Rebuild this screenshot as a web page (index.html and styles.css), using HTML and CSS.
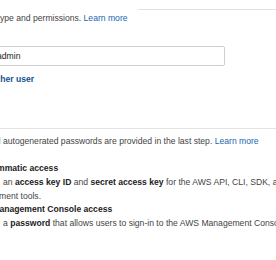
FILE: index.html
```html
<!DOCTYPE html>
<html>
<head>
<meta charset="utf-8">
<link rel="stylesheet" href="styles.css">
</head>
<body>
<div class="panel details">
  <p class="desc shift-type">type and permissions. <a class="link">Learn more</a></p>
  <div class="field">
    <div class="input">admin</div>
  </div>
  <a class="add-user">another user</a>
</div>
<div class="panel access">
  <p class="desc shift-and">and autogenerated passwords are provided in the last step. <a class="link">Learn more</a></p>
  <div class="options">
    <div class="opt-title shift-mm">mmatic access</div>
    <div class="opt-text pad">an <b>access key ID</b> and <b>secret access key</b> for the AWS API, CLI, SDK, and other develop-</div>
    <div class="opt-text shift-ment">ment tools.</div>
    <div class="opt-title shift-an">anagement Console access</div>
    <div class="opt-text pad">a <b>password</b> that allows users to sign-in to the AWS Management Console.</div>
  </div>
</div>
</body>
</html>
```
FILE: styles.css
```css
html, body {
  margin: 0;
  padding: 0;
  background: #ffffff;
  overflow: hidden;
}
body {
  font-family: "Liberation Sans", Arial, Helvetica, sans-serif;
  font-size: 8.6px;
  color: #444444;
  width: 276px;
  height: 260px;
}
p { margin: 0; }
b { color: #222; font-weight: bold; }
.link { color: #1b66b0; text-decoration: none; }

.panel {
  white-space: nowrap;
}
.details {
  margin-top: 9px;
  padding-top: 3px;
  background: linear-gradient(#e3e3e3, #e3e3e3) no-repeat 138px 0 / 138px 1px;
}
.desc {
  line-height: 13px;
  height: 13px;
}
.shift-type { margin-left: -2.4px; }
.field {
  margin-top: 21px;
}
.input {
  box-sizing: border-box;
  margin-left: -20px;
  width: 245px;
  height: 20px;
  border: 1px solid #cfcfcf;
  border-radius: 2px;
  padding-left: 16px;
  line-height: 18px;
  color: #222;
}
.add-user {
  display: block;
  margin-top: 7px;
  margin-left: -18px;
  line-height: 13px;
  font-weight: bold;
  color: #13548f;
}
.access {
  border-top: 1px solid #e3e3e3;
  margin-top: 42px;
  padding-top: 6px;
}
.shift-and { margin-left: -13.7px; }
.options {
  margin-top: 14px;
  line-height: 13.75px;
}
.opt-title {
  font-weight: bold;
  color: #222;
}
.shift-mm { margin-left: -3px; }
.shift-an { margin-left: -0.5px; }
.shift-ment { margin-left: -1px; }
.pad { padding-left: 3px; }
```
